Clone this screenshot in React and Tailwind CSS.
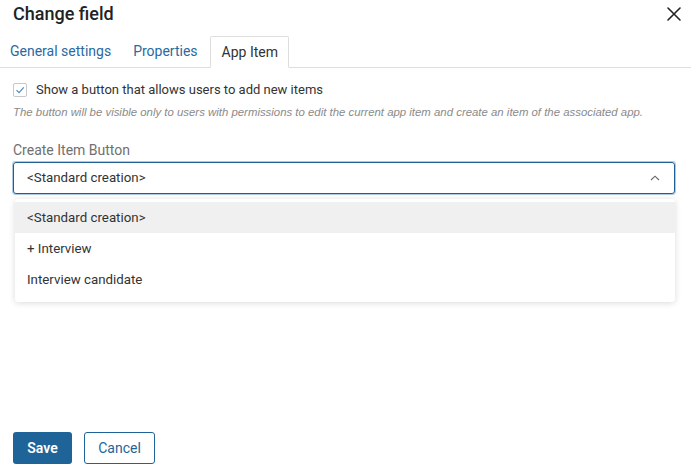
import React from 'react';

const App = () => {
  const options = ['<Standard creation>', '+ Interview', 'Interview candidate'];

  return (
    <div className="relative w-[691px] h-[466px] bg-white text-[#333] overflow-hidden" style={{ fontFamily: 'Roboto, "Liberation Sans", sans-serif' }}>
      {/* Header */}
      <div className="flex items-center justify-between pl-[13px] pr-[8px] h-[27px]">
        <h1 className="text-[18px] font-medium text-[#222]">Change field</h1>
        <button className="w-[18px] h-[18px] flex items-center justify-center text-[#222]">
          <svg width="16" height="16" viewBox="0 0 16 16" fill="none" stroke="currentColor" strokeWidth="1.6" strokeLinecap="round">
            <path d="M2 2 L14 14 M14 2 L2 14" />
          </svg>
        </button>
      </div>

      {/* Tabs */}
      <div className="flex items-end h-[41px] border-b border-[#dedede] pl-[10px]">
        <div className="h-[31px] flex items-center text-[14px] text-[#2a6a9f] mr-[22px]">General settings</div>
        <div className="h-[31px] flex items-center text-[14px] text-[#2a6a9f] mr-[12px]">Properties</div>
        <div className="h-[32px] -mb-px flex items-center pl-[11px] pr-[10px] text-[14px] text-[#333] bg-white border border-[#dedede] border-b-white rounded-t-[2px]">App Item</div>
      </div>

      {/* Body */}
      <div className="px-[13px] pt-[14px]">
        <label className="flex items-center gap-[9px] h-[16px]">
          <span className="w-[14px] h-[14px] border border-[#c8c8c8] rounded-[2px] flex items-center justify-center bg-white">
            <svg width="10" height="10" viewBox="0 0 10 10" fill="none" stroke="#4a86c0" strokeWidth="1.1">
              <path d="M1.5 5.2 L4 7.6 L8.8 2.4" />
            </svg>
          </span>
          <span className="text-[13px] text-[#333]">Show a button that allows users to add new items</span>
        </label>
        <p className="mt-[6px] text-[11.4px] leading-[16px] italic text-[#8a8a8a]" style={{ fontFamily: '"Liberation Sans", Arial, sans-serif' }}>
          The button will be visible only to users with permissions to edit the current app item and create an item of the associated app.
        </p>

        <div className="mt-[21px] text-[14px] leading-[18px] text-[#707070]">Create Item Button</div>

        <div className="relative mt-[3px]">
          <div className="h-[32px] w-[662px] flex items-center justify-between pl-[13px] pr-[14px] border border-[#1f5f96] rounded-[3px] shadow-[0_0_0_1px_rgba(120,165,205,0.6)]">
            <span className="text-[13.3px] text-[#333]">&lt;Standard creation&gt;</span>
            <svg width="10" height="6" viewBox="0 0 10 6" fill="none" stroke="#666" strokeWidth="1.1">
              <path d="M1 5 L5 1.2 L9 5" />
            </svg>
          </div>

          {/* Dropdown */}
          <div className="absolute left-[2px] top-[37px] w-[660px] bg-white rounded-[3px] shadow-[0_1px_6px_rgba(0,0,0,0.15)] pt-[3px] pb-[7px]">
            {options.map((opt, i) => (
              <div key={i} className={`h-[31px] flex items-center px-[12px] text-[13.3px] text-[#333] ${i === 0 ? 'bg-[#f0f0f0]' : ''}`}>
                {opt}
              </div>
            ))}
          </div>
        </div>
      </div>

      {/* Footer */}
      <div className="absolute left-[13px] top-[432px] flex gap-[12px]">
        <button className="h-[32px] w-[59px] rounded-[3px] bg-[#1f6499] text-white text-[14px] font-semibold">Save</button>
        <button className="h-[32px] w-[71px] rounded-[3px] border border-[#1f6499] text-[#1f6499] text-[14px] bg-white">Cancel</button>
      </div>
    </div>
  );
};

export default App;
